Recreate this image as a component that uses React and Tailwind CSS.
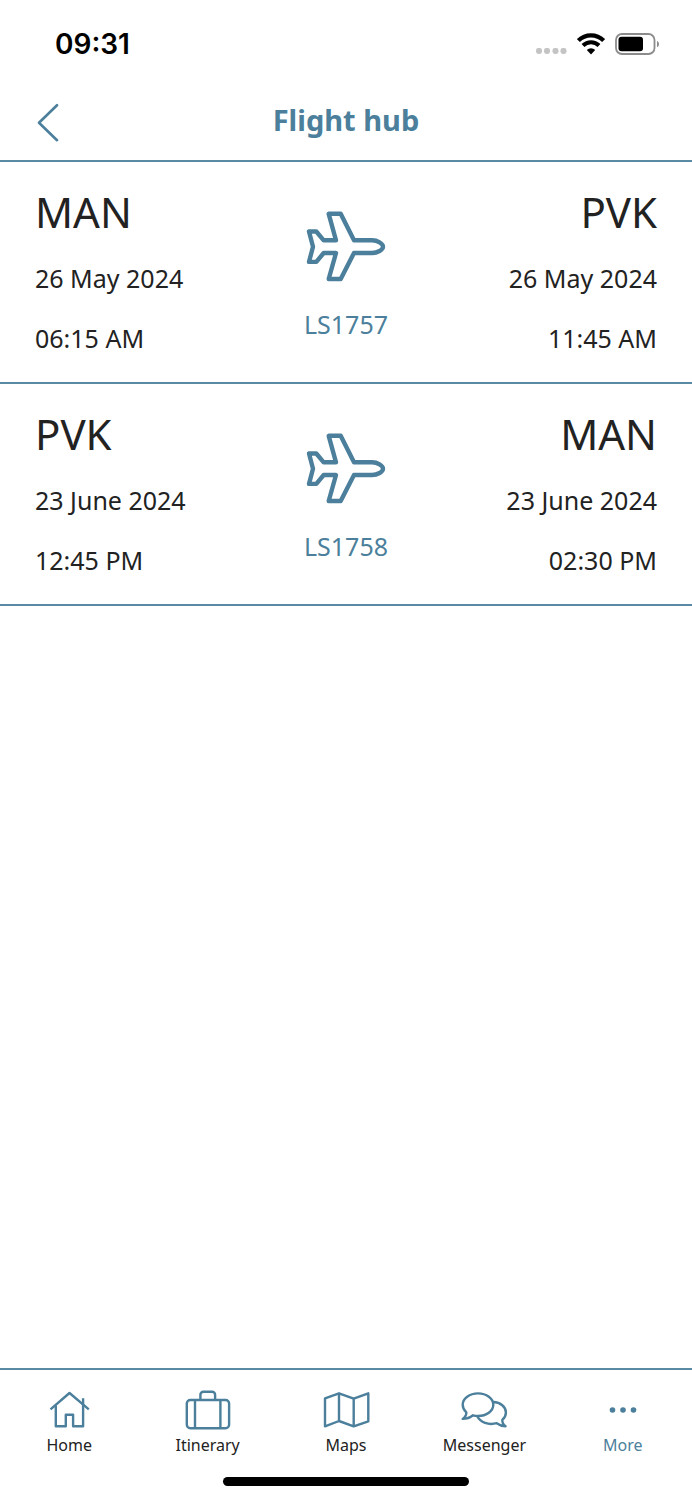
const flights = [
  {
    number: "LS1757",
    from: { code: "MAN", date: "26 May 2024", time: "06:15 AM" },
    to: { code: "PVK", date: "26 May 2024", time: "11:45 AM" },
  },
  {
    number: "LS1758",
    from: { code: "PVK", date: "23 June 2024", time: "12:45 PM" },
    to: { code: "MAN", date: "23 June 2024", time: "02:30 PM" },
  },
];

function StatusBar() {
  return (
    <div className="flex h-20 items-center justify-between pt-2 pr-8 pl-[55px] text-black">
      <span className="font-['Inter',sans-serif] text-[28px] leading-9 font-semibold">09:31</span>
      <div className="flex items-center gap-2.5">
        <svg className="h-6 w-8" viewBox="0 0 32 24" fill="#c4c4c4" aria-hidden="true">
          <rect x="1" y="16" width="6" height="6" rx="2.4" />
          <rect x="9" y="16" width="6" height="6" rx="2.4" />
          <rect x="17.5" y="16" width="6" height="6" rx="2.4" />
          <rect x="25.5" y="16" width="6" height="6" rx="2.4" />
        </svg>
        <svg className="h-6 w-7" viewBox="0 0 28 24" fill="none" stroke="currentColor" aria-hidden="true">
          <path d="M1.4 8.6a18 18 0 0 1 25.200 0" strokeWidth="4.200" />
          <path d="M6 13.500a11.300 11.300 0 0 1 16 0" strokeWidth="4" />
          <path d="M9.800 18a6 6 0 0 1 8.400 0L14 22.400z" fill="currentColor" stroke="none" />
        </svg>
        <svg className="h-6 w-[45px]" viewBox="0 0 45 24" aria-hidden="true">
          <rect x="1" y="2" width="38.5" height="20" rx="6" fill="none" stroke="#8c8c8c" strokeWidth="1.8" />
          <rect x="3.5" y="4.800" width="24.5" height="14.4" rx="3" fill="currentColor" />
          <path d="M42 9v6.2c2.7-1 2.7-5.2 0-6.2z" fill="#8c8c8c" />
        </svg>
      </div>
    </div>
  );
}

function PlaneIcon() {
  return (
    <svg
      className="h-[72px] w-20"
      viewBox="0 0 80 72"
      fill="none"
      stroke="currentColor"
      strokeWidth="4.4"
      strokeLinejoin="round"
      aria-hidden="true"
    >
      <path d="M22.7 3.8H34.7L48 30.3H66C71.5 30.3 77 33.6 77 36.7S71.5 43 66 43H48L34.7 69H22.7L30 43H17.7L10.3 51.9H3L7 36.7L3 21.5H10.3L17.7 30.3H30Z" />
    </svg>
  );
}

function Stop({ stop, right }) {
  return (
    <div className={right ? "text-right" : "text-left"}>
      <h2 className="mb-1.5 text-[42px] leading-[60px]">{stop.code}</h2>
      <p className="text-[25px] leading-[60px]">{stop.date}</p>
      <p className="text-[25px] leading-[60px]">{stop.time}</p>
    </div>
  );
}

function Flight({ flight }) {
  return (
    <li className="border-b-2 border-[#5a8aa3]">
      <a href="#flight" className="grid grid-cols-[1fr_auto_1fr] px-[35px] pt-5 pb-3.5">
        <Stop stop={flight.from} />
        <div className="flex flex-col items-center pt-7 text-[#4b7f9b]">
          <PlaneIcon />
          <span className="mt-6 text-[25px] leading-9">{flight.number}</span>
        </div>
        <Stop stop={flight.to} right />
      </a>
    </li>
  );
}

const tabs = [
  {
    label: "Home",
    icon: (
      <>
        <path d="M5.5 19.3L24.5 3L43.8 19.3" />
        <path d="M10.8 15.6V36.3H20.8V24.7H28.1V36.3H38.1V8.3" />
      </>
    ),
  },
  {
    label: "Itinerary",
    icon: (
      <>
        <rect x="2.8" y="10" width="42.3" height="28.3" rx="3.5" />
        <path d="M11 10V38.3M36.400 10V38.3" />
        <path d="M16.400 10V4.7a3 3 0 0 1 3-3H28.100a3 3 0 0 1 3 3V10" />
      </>
    ),
  },
  {
    label: "Maps",
    icon: (
      <path d="M3 8.3L17 3.3L31.7 8.7L46.3 3.3V31.3L31.7 36.3L17 31L3 36.3ZM17 3.3V31M31.7 8.7V36.3" />
    ),
  },
  {
    label: "Messenger",
    icon: (
      <>
        <path d="M6.300 22.300C4 20.200 2.700 17.600 2.700 14.700C2.700 8.400 9.500 3.400 18 3.400S33.300 8.400 33.300 14.700S26.500 26 18 26C16.200 26 14.500 25.800 13 25.300C10 27.700 6.500 28.900 2.700 28.900C5 27.200 6.600 25 6.300 22.300Z" />
        <path d="M33.300 12C40.500 12.300 45.900 16.800 45.900 22.400C45.900 25.300 44.600 27.900 42.300 29.900C42.200 32.500 43.300 34.700 45.600 36.200C42.200 36.200 39.400 35.200 36.700 33.200C28.500 35.300 20.300 32.600 17.300 26.300" />
      </>
    ),
  },
  {
    label: "More",
    active: true,
    icon: (
      <g fill="currentColor" stroke="none">
        <circle cx="13.500" cy="20" r="2.800" />
        <circle cx="24" cy="20" r="2.800" />
        <circle cx="34.500" cy="20" r="2.800" />
      </g>
    ),
  },
];

function TabBar() {
  return (
    <footer className="border-t-2 border-[#5a8aa3] pt-5 pb-3.5">
      <nav className="grid grid-cols-5">
        {tabs.map((tab) => (
          <a
            key={tab.label}
            href={"#" + tab.label.toLowerCase()}
            aria-current={tab.active ? "page" : undefined}
            className="flex flex-col items-center gap-[3px] text-[#4b7f9b]"
          >
            <svg
              className="h-10 w-12"
              viewBox="0 0 48 40"
              fill="none"
              stroke="currentColor"
              strokeWidth="2.4"
              strokeLinejoin="round"
              aria-hidden="true"
            >
              {tab.icon}
            </svg>
            <span className={tab.active ? "text-base leading-6" : "text-base leading-6 text-[#222]"}>
              {tab.label}
            </span>
          </a>
        ))}
      </nav>
      <div className="mx-auto mt-5 h-[9px] w-[246px] rounded-full bg-black" />
    </footer>
  );
}

export default function App() {
  return (
    <div className="flex min-h-screen flex-col bg-white font-['Noto_Sans',sans-serif] text-[#222]">
      <StatusBar />
      <header className="grid grid-cols-[1fr_auto_1fr] items-center border-b-2 border-[#5a8aa3] px-9 py-[18px] text-[#4b7f9b]">
        <button type="button" aria-label="Back" className="justify-self-start">
          <svg
            className="h-11 w-6"
            viewBox="0 0 24 44"
            fill="none"
            stroke="currentColor"
            strokeWidth="2.6"
            strokeLinecap="round"
            strokeLinejoin="round"
            aria-hidden="true"
          >
            <path d="M21 7.200L3 24.700L21 42.200" />
          </svg>
        </button>
        <h1 className="text-[29px] leading-10 font-bold">Flight hub</h1>
      </header>
      <main className="grow">
        <ul>
          {flights.map((flight) => (
            <Flight key={flight.number} flight={flight} />
          ))}
        </ul>
      </main>
      <TabBar />
    </div>
  );
}
